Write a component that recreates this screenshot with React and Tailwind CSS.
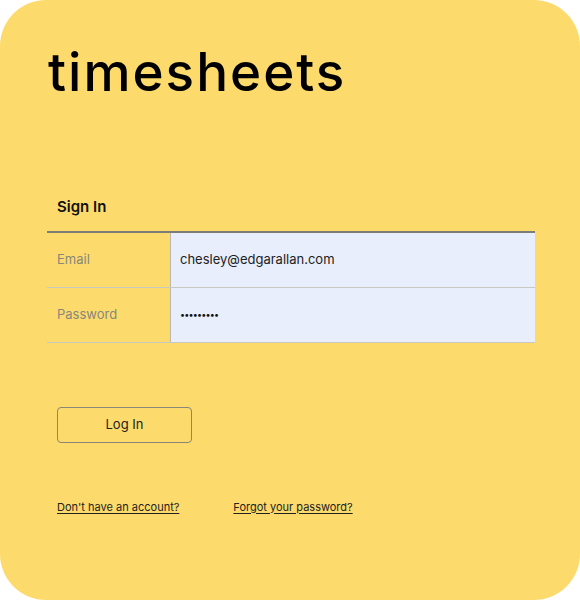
import React from 'react';

export default function App() {
    const font = { fontFamily: 'Inter, "Liberation Sans", sans-serif' };

    return (
        <div className="w-[580px] h-[600px] bg-white" style={font}>
            <div className="w-full h-full bg-[#fdda6c] rounded-[46px] px-[47px] pt-[40px]">
                {/* Logo */}
                <h1 className="text-[53px] leading-[64px] font-medium text-black tracking-[2px] ml-[1px]">timesheets</h1>

                {/* Form */}
                <h2 className="mt-[92px] ml-[10px] text-[15px] font-semibold text-[#111]">Sign In</h2>

                <div className="mt-[12px] w-[488px] border-t-2 border-[#7c7c78]">
                    <div className="flex h-[55px] border-b border-[#c9c9c4]">
                        <label className="w-[123px] pl-[10px] flex items-center text-[13px] text-[#87877c]">Email</label>
                        <div className="flex-1 bg-[#e8eefb] border-l border-[#b9b9b4] pl-[9px] flex items-center text-[13px] text-[#222]">
                            chesley@edgarallan.com
                        </div>
                    </div>
                    <div className="flex h-[55px] border-b border-[#c9c9c4]">
                        <label className="w-[123px] pl-[10px] flex items-center text-[13px] text-[#87877c]">Password</label>
                        <div className="flex-1 bg-[#e8eefb] border-l border-[#b9b9b4] pl-[9px] flex items-center text-[9px] text-[#111] tracking-[-0.8px]">
                            •••••••••
                        </div>
                    </div>
                </div>

                <button className="mt-[64px] ml-[10px] w-[135px] h-[36px] border border-[#8a8777] rounded-[4px] text-[13px] text-[#222] flex items-center justify-center">
                    Log In
                </button>

                <div className="mt-[56px] ml-[10px] flex gap-[54px] text-[11px] text-[#222]">
                    <a href="#" className="underline underline-offset-2">Don't have an account?</a>
                    <a href="#" className="underline underline-offset-2">Forgot your password?</a>
                </div>
            </div>
        </div>
    );
}
